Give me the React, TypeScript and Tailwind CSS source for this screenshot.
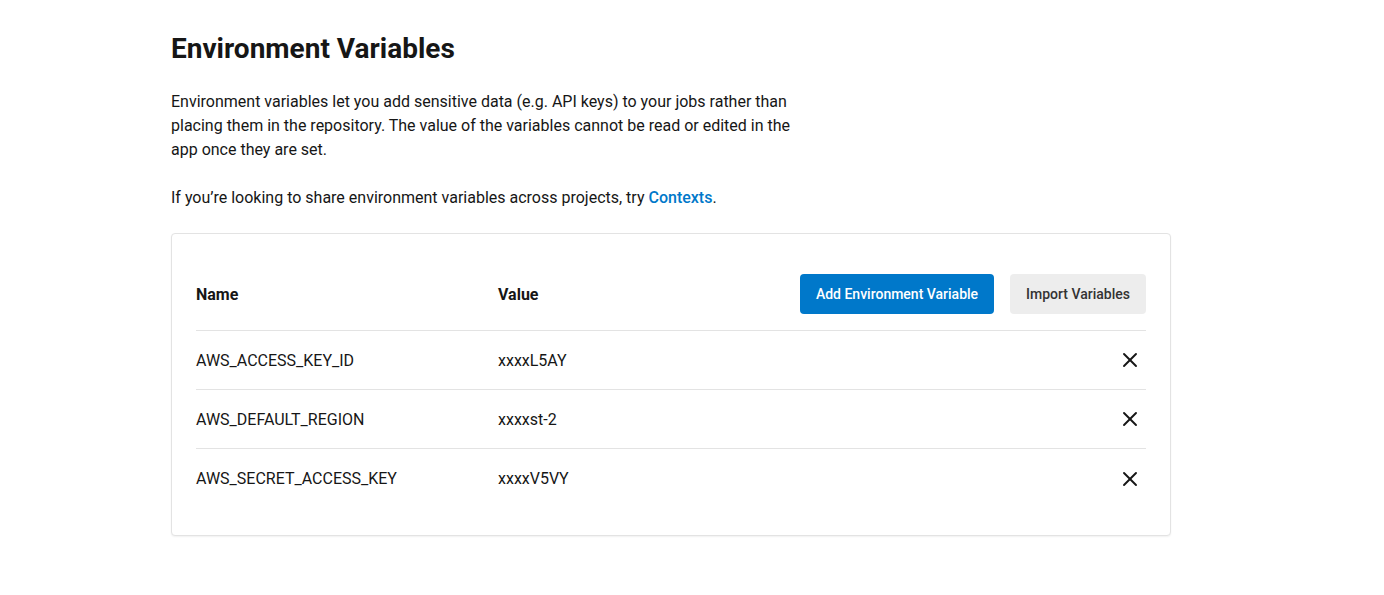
import { X } from 'lucide-react';

const vars = [
    { name: 'AWS_ACCESS_KEY_ID', value: 'xxxxL5AY' },
    { name: 'AWS_DEFAULT_REGION', value: 'xxxxst-2' },
    { name: 'AWS_SECRET_ACCESS_KEY', value: 'xxxxV5VY' },
];

const App = () => {
    return (
        <div className="min-h-screen bg-white text-[#161616]" style={{ fontFamily: 'Roboto, "Noto Sans", sans-serif' }}>
            <div className="ml-[171px] w-[1000px] pt-[31px]">
                <h1 className="text-[28px] leading-[36px] font-bold">Environment Variables</h1>

                <p className="mt-[23px] max-w-[640px] text-[16px] leading-[24px]">
                    Environment variables let you add sensitive data (e.g. API keys) to your jobs rather than
                    placing them in the repository. The value of the variables cannot be read or edited in the
                    app once they are set.
                </p>
                <p className="mt-[24px] text-[16px] leading-[24px]">
                    If you’re looking to share environment variables across projects, try{' '}
                    <a className="text-[#0078ca] font-medium" href="#">Contexts</a>.
                </p>

                {/* Variables table */}
                <div className="mt-[23px] rounded border border-[#e3e3e3] bg-white px-6 pt-10 pb-[27px] shadow-[0_1px_2px_rgba(0,0,0,0.06)]">
                    <div className="flex items-center border-b border-[#e3e3e3] pb-4">
                        <div className="w-[302px] pt-px text-[16px] font-bold">Name</div>
                        <div className="flex-1 pt-px text-[16px] font-bold">Value</div>
                        <div className="flex gap-4">
                            <button className="h-10 w-[194px] rounded bg-[#0078ca] text-[14px] font-medium text-white">
                                Add Environment Variable
                            </button>
                            <button className="h-10 w-[136px] rounded bg-[#ededed] text-[14px] font-medium text-[#333333]">
                                Import Variables
                            </button>
                        </div>
                    </div>
                    {vars.map((v, i) => (
                        <div
                            key={v.name}
                            className={`flex h-[59px] items-center text-[16px] ${i < vars.length - 1 ? 'border-b border-[#e3e3e3]' : ''}`}
                        >
                            <div className="w-[302px] pt-px">{v.name}</div>
                            <div className="flex-1 pt-px">{v.value}</div>
                            <X size={24} strokeWidth={1.9} className="mr-[4px] text-[#161616]" />
                        </div>
                    ))}
                </div>
            </div>
        </div>
    );
};

export default App;
